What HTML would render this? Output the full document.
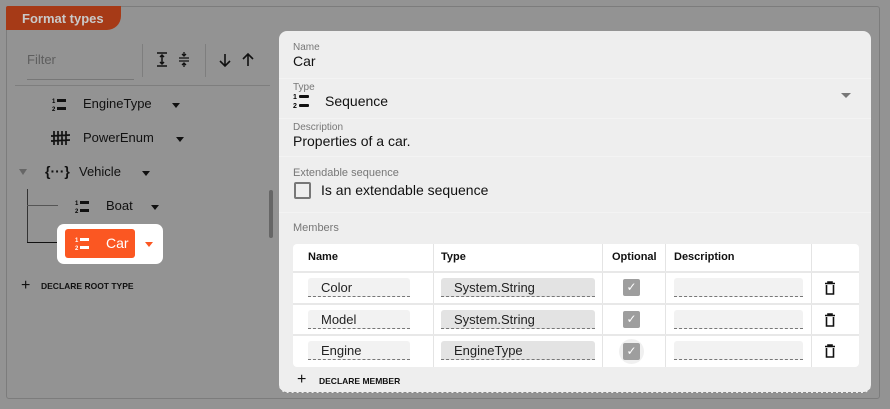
<!DOCTYPE html>
<html><head><style>
*{box-sizing:border-box;margin:0;padding:0}
body{width:890px;height:409px;background:#939393;font-family:"Liberation Sans",sans-serif;position:relative;overflow:hidden;color:#111}
.abs{position:absolute}
.panel{left:6px;top:6px;width:874px;height:393px;border:1px solid #7c7c7c;border-radius:3px}
.tab{left:6px;top:6px;width:115px;height:24px;background:#a63a17;border-radius:2px 0 14px 0;color:#c9c9c9;font-weight:bold;font-size:13px;padding:5px 0 0 16px}
.card{left:279px;top:31px;width:592px;height:362px;background:#eeeeee;border-radius:8px;border-bottom:1px dashed #888}
.lbl{font-size:10px;color:#777}
.val{font-size:14px;color:#111}
.sep{left:0;width:592px;height:1px;background:#f3f3f3}
.tbl{left:14px;top:213px;width:566px;height:123px;background:#fff;border-radius:4px}
.vl{width:1px;background:#e4e4e4;top:0;height:123px}
.hl{height:2px;background:#e8e8e8;left:0;width:566px}
.th{font-size:11px;font-weight:bold;top:7px;color:#111}
.inp{height:19px;border-bottom:1px dashed #777;background:#f2f2f2;border-radius:3px 3px 0 0;font-size:13px;padding:2px 0 0 13px;color:#222}
.tinp{background:#e3e3e3}
.cb{width:17px;height:17px;background:#9e9e9e;border-radius:2px;color:#fff;font-size:12px;text-align:center;line-height:17px}
.tree{font-size:13px;color:#111}
.caret{width:0;height:0;border-left:4px solid transparent;border-right:4px solid transparent;border-top:5px solid #111}
</style></head><body>
<div class="abs panel"></div>
<div class="abs tab">Format types</div>
<div class="abs" style="left:27px;top:52px;font-size:13px;color:#5e5e5e">Filter</div>
<div class="abs" style="left:27px;top:79px;width:107px;height:1px;background:#777"></div>
<div class="abs" style="left:142px;top:44px;width:1px;height:33px;background:#7e7e7e"></div>
<div class="abs" style="left:205px;top:44px;width:1px;height:33px;background:#7e7e7e"></div>
<svg class="abs" style="left:154px;top:51px" width="40" height="18" viewBox="0 0 40 18"><path d="M3 2h10M3 15h10M8 4v9M6 6l2-2 2 2M6 11l2 2 2-2" stroke="#111" stroke-width="1.5" fill="none"/><path d="M25 7h10M25 10h10M30 1v4M28 3l2 2 2-2M30 16v-4M28 14l2-2 2 2" stroke="#111" stroke-width="1.3" fill="none"/></svg>
<svg class="abs" style="left:216px;top:51px" width="42" height="18" viewBox="0 0 42 18"><path d="M9 3v12M4 10l5 5 5-5" stroke="#111" stroke-width="1.6" fill="none"/><path d="M32 15V3M27 8l5-5 5 5" stroke="#111" stroke-width="1.6" fill="none"/></svg>
<div class="abs" style="left:15px;top:85px;width:255px;height:1px;background:#7e7e7e"></div>
<svg class="abs" style="left:52px;top:97px" width="18" height="15" viewBox="0 0 18 15"><text x="0" y="6" font-size="6" font-family="Liberation Sans" font-weight="bold">1</text><text x="0" y="14" font-size="6" font-family="Liberation Sans" font-weight="bold">2</text><rect x="5" y="2" width="9" height="3" fill="#111"/><rect x="5" y="10" width="9" height="3" fill="#111"/></svg>
<div class="abs tree" style="left:83px;top:96px">EngineType</div>
<div class="abs caret" style="left:172px;top:103px"></div>
<svg class="abs" style="left:51px;top:131px" width="19" height="14" viewBox="0 0 19 14"><path d="M3 0v14M7 0v14M11 0v14M15 0v14M0 5l19-1M0 10l19-1" stroke="#111" stroke-width="1.7"/></svg>
<div class="abs tree" style="left:83px;top:130px">PowerEnum</div>
<div class="abs caret" style="left:176px;top:137px"></div>
<div class="abs" style="left:19px;top:169px;border-left:4px solid transparent;border-right:4px solid transparent;border-top:6px solid #666"></div>
<div class="abs" style="left:45px;top:163px;font-size:14px;font-weight:bold">{···}</div>
<div class="abs tree" style="left:79px;top:164px">Vehicle</div>
<div class="abs caret" style="left:142px;top:171px"></div>
<div class="abs" style="left:27px;top:189px;width:1px;height:54px;background:#333"></div>
<div class="abs" style="left:27px;top:205px;width:31px;height:1px;background:#555"></div>
<div class="abs" style="left:27px;top:242px;width:31px;height:1px;background:#111"></div>
<svg class="abs" style="left:75px;top:199px" width="18" height="15" viewBox="0 0 18 15"><text x="0" y="6" font-size="6" font-family="Liberation Sans" font-weight="bold">1</text><text x="0" y="14" font-size="6" font-family="Liberation Sans" font-weight="bold">2</text><rect x="5" y="2" width="9" height="3" fill="#111"/><rect x="5" y="10" width="9" height="3" fill="#111"/></svg>
<div class="abs tree" style="left:106px;top:198px">Boat</div>
<div class="abs caret" style="left:151px;top:205px"></div>
<div class="abs" style="left:57px;top:224px;width:106px;height:40px;background:#fff;border-radius:7px"></div>
<div class="abs" style="left:65px;top:229px;width:70px;height:29px;background:#fb5722;border-radius:3px"></div>
<svg class="abs" style="left:75px;top:236px" width="18" height="15" viewBox="0 0 18 15"><text x="0" y="6" font-size="6" font-family="Liberation Sans" font-weight="bold" fill="#fff">1</text><text x="0" y="14" font-size="6" font-family="Liberation Sans" font-weight="bold" fill="#fff">2</text><rect x="5" y="2" width="9" height="3" fill="#fff"/><rect x="5" y="10" width="9" height="3" fill="#fff"/></svg>
<div class="abs" style="left:106px;top:235px;font-size:14px;color:#fff">Car</div>
<div class="abs" style="left:145px;top:242px;border-left:4px solid transparent;border-right:4px solid transparent;border-top:5px solid #fb5722"></div>
<div class="abs" style="left:21px;top:279px;font-size:16px;line-height:14px">+</div>
<div class="abs" style="left:41px;top:281px;font-size:8.5px;font-weight:bold">DECLARE ROOT TYPE</div>
<div class="abs" style="left:269px;top:190px;width:4px;height:48px;background:#666;border-radius:2px"></div>
<div class="abs card">
 <div class="abs sep" style="top:47px"></div>
 <div class="abs sep" style="top:87px"></div>
 <div class="abs sep" style="top:125px"></div>
 <div class="abs sep" style="top:181px"></div>
 <div class="abs lbl" style="left:14px;top:11px">Name</div>
 <div class="abs val" style="left:14px;top:22px">Car</div>
 <div class="abs lbl" style="left:14px;top:51px">Type</div>
 <svg class="abs" style="left:14px;top:61px" width="20" height="17" viewBox="0 0 20 17"><text x="0" y="7" font-size="7" font-family="Liberation Sans" font-weight="bold">1</text><text x="0" y="16" font-size="7" font-family="Liberation Sans" font-weight="bold">2</text><rect x="6" y="3" width="10" height="3" rx="1" fill="#111"/><rect x="6" y="12" width="10" height="3" rx="1" fill="#111"/></svg>
 <div class="abs val" style="left:46px;top:62px">Sequence</div>
 <div class="abs" style="left:562px;top:62px;border-left:5px solid transparent;border-right:5px solid transparent;border-top:5px solid #777"></div>
 <div class="abs lbl" style="left:14px;top:91px">Description</div>
 <div class="abs val" style="left:14px;top:102px">Properties of a car.</div>
 <div class="abs lbl" style="left:14px;top:136px;font-size:11px">Extendable sequence</div>
 <div class="abs" style="left:15px;top:151px;width:17px;height:17px;border:2px solid #777;border-radius:2px"></div>
 <div class="abs val" style="left:42px;top:151px">Is an extendable sequence</div>
 <div class="abs lbl" style="left:14px;top:191px;font-size:11px">Members</div>
 <div class="abs tbl">
  <div class="abs vl" style="left:140px"></div>
  <div class="abs vl" style="left:309px"></div>
  <div class="abs vl" style="left:372px"></div>
  <div class="abs vl" style="left:518px"></div>
  <div class="abs hl" style="top:27px"></div>
  <div class="abs hl" style="top:59px"></div>
  <div class="abs hl" style="top:90px"></div>
  <div class="abs th" style="left:15px">Name</div>
  <div class="abs th" style="left:148px">Type</div>
  <div class="abs th" style="left:319px">Optional</div>
  <div class="abs th" style="left:381px">Description</div>

  <div class="abs inp" style="left:15px;top:34px;width:102px">Color</div>
  <div class="abs inp tinp" style="left:148px;top:34px;width:154px">System.String</div>
  <div class="abs cb" style="left:330px;top:35px">✓</div>
  <div class="abs inp" style="left:381px;top:34px;width:129px"></div>
  <svg class="abs" style="left:531px;top:37px" width="12" height="14" viewBox="0 0 12 14"><path d="M1 2.5h10M4 2.5V1h4v1.5M2.5 4v9h7V4" stroke="#111" stroke-width="1.6" fill="none"/></svg>

  <div class="abs inp" style="left:15px;top:66px;width:102px">Model</div>
  <div class="abs inp tinp" style="left:148px;top:66px;width:154px">System.String</div>
  <div class="abs cb" style="left:330px;top:67px">✓</div>
  <div class="abs inp" style="left:381px;top:66px;width:129px"></div>
  <svg class="abs" style="left:531px;top:69px" width="12" height="14" viewBox="0 0 12 14"><path d="M1 2.5h10M4 2.5V1h4v1.5M2.5 4v9h7V4" stroke="#111" stroke-width="1.6" fill="none"/></svg>

  <div class="abs inp" style="left:15px;top:97px;width:102px">Engine</div>
  <div class="abs inp tinp" style="left:148px;top:97px;width:154px">EngineType</div>
  <div class="abs" style="left:326px;top:95px;width:25px;height:25px;border-radius:50%;background:#f0f0f0"></div>
  <div class="abs cb" style="left:330px;top:99px">✓</div>
  <div class="abs inp" style="left:381px;top:97px;width:129px"></div>
  <svg class="abs" style="left:531px;top:100px" width="12" height="14" viewBox="0 0 12 14"><path d="M1 2.5h10M4 2.5V1h4v1.5M2.5 4v9h7V4" stroke="#111" stroke-width="1.6" fill="none"/></svg>
 </div>
 <div class="abs" style="left:18px;top:342px;font-size:16px;line-height:14px">+</div>
 <div class="abs" style="left:40px;top:345px;font-size:8.5px;font-weight:bold">DECLARE MEMBER</div>
</div>
</body></html>
